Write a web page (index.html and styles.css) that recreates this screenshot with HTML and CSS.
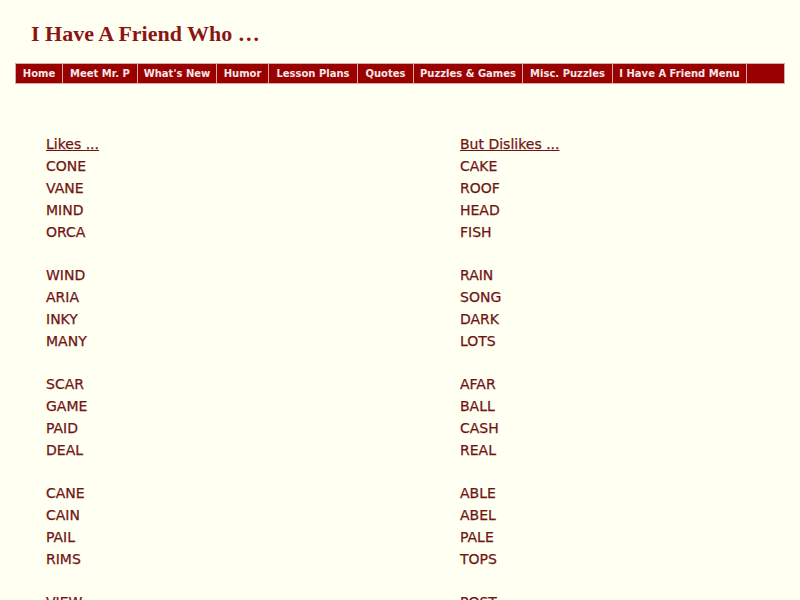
FILE: index.html
```html
<!DOCTYPE html>
<html>
<head>
<meta charset="utf-8">
<link rel="stylesheet" href="styles.css">
</head>
<body>
<h1 class="title">I Have A Friend Who …</h1>
<nav class="nav">
  <a class="nav-item w-home">Home</a>
  <a class="nav-item w-meet">Meet Mr. P</a>
  <a class="nav-item w-new">What's New</a>
  <a class="nav-item w-humor">Humor</a>
  <a class="nav-item w-lesson">Lesson Plans</a>
  <a class="nav-item w-quotes">Quotes</a>
  <a class="nav-item w-puzzles">Puzzles &amp; Games</a>
  <a class="nav-item w-misc">Misc. Puzzles</a>
  <a class="nav-item w-friend">I Have A Friend Menu</a>
  <span class="nav-item nav-fill"></span>
</nav>
<div class="words">
  <div class="col left">
    <div class="head">Likes ...</div>
    <div>CONE</div><div>VANE</div><div>MIND</div><div>ORCA</div><div class="gap"></div>
    <div>WIND</div><div>ARIA</div><div>INKY</div><div>MANY</div><div class="gap"></div>
    <div>SCAR</div><div>GAME</div><div>PAID</div><div>DEAL</div><div class="gap"></div>
    <div>CANE</div><div>CAIN</div><div>PAIL</div><div>RIMS</div><div class="gap"></div>
    <div>VIEW</div>
  </div>
  <div class="col right">
    <div class="head">But Dislikes ...</div>
    <div>CAKE</div><div>ROOF</div><div>HEAD</div><div>FISH</div><div class="gap"></div>
    <div>RAIN</div><div>SONG</div><div>DARK</div><div>LOTS</div><div class="gap"></div>
    <div>AFAR</div><div>BALL</div><div>CASH</div><div>REAL</div><div class="gap"></div>
    <div>ABLE</div><div>ABEL</div><div>PALE</div><div>TOPS</div><div class="gap"></div>
    <div>POST</div>
  </div>
</div>
</body>
</html>
```

FILE: styles.css
```css
html, body {
  margin: 0;
  padding: 0;
  background: #fffff2;
}
body {
  overflow: hidden;
  height: 600px;
}
.title {
  margin: 0;
  padding: 21px 0 0 31px;
  height: 43px;
  box-sizing: border-box;
  font-family: "Liberation Serif", serif;
  font-weight: bold;
  font-size: 22px;
  line-height: 26px;
  color: #8b1515;
}
.nav {
  display: flex;
  margin: 20px 15px 0 15px;
  height: 21px;
  background: #9b0000;
}
.nav-item {
  box-sizing: border-box;
  height: 21px;
  border: 1px solid #d9a8a8;
  border-left: none;
  font-family: "DejaVu Sans", sans-serif;
  font-weight: bold;
  font-size: 10px;
  line-height: 19px;
  color: #f4e8e8;
  text-align: center;
  white-space: nowrap;
}
.nav-item:first-child { border-left: 1px solid #d9a8a8; }
.w-home { width: 48px; }
.w-meet { width: 75px; }
.w-new { width: 79px; }
.w-humor { width: 52px; }
.w-lesson { width: 89px; }
.w-quotes { width: 56px; }
.w-puzzles { width: 109px; }
.w-misc { width: 90px; }
.w-friend { width: 134px; }
.nav-fill { width: 38px; }
.words {
  display: grid;
  grid-template-columns: 414px 1fr;
  padding: 49px 0 0 46px;
  font-family: "DejaVu Sans", sans-serif;
  font-size: 14px;
  line-height: 22px;
  color: #701414;
  -webkit-text-stroke: 0.25px #701414;
}
.col div { height: 22px; }
.col .gap { height: 21px; }
.head { text-decoration: underline; }
```
